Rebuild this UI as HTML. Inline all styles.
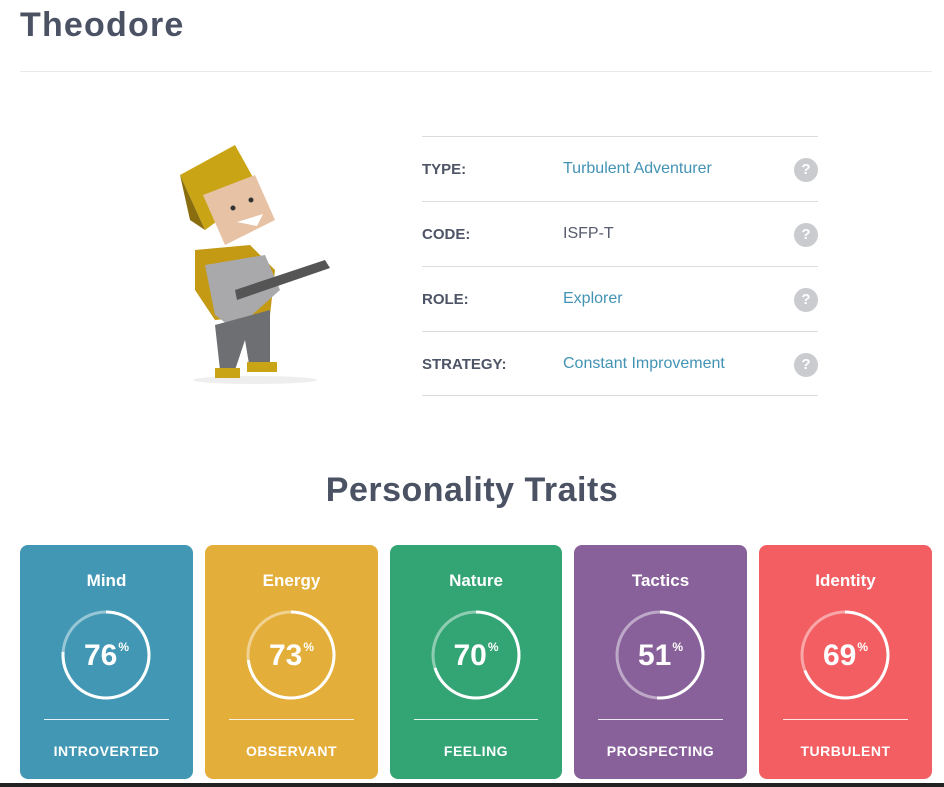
<!DOCTYPE html>
<html><head><meta charset="utf-8"><style>
*{margin:0;padding:0;box-sizing:border-box}
body{width:944px;height:787px;background:#fff;font-family:"Liberation Sans",sans-serif;position:relative;overflow:hidden;color:#4d5466}
h1{position:absolute;left:20px;top:6px;font-size:34px;font-weight:bold;color:#4b5264;letter-spacing:1.2px}
.hr{position:absolute;left:20px;top:71px;width:912px;height:1px;background:#e9e9ea}
.tbl{position:absolute;left:422px;top:136px;width:396px}
.row{height:65px;border-top:1px solid #dcdcdf;position:relative;font-size:16px}
.row:last-child{border-bottom:1px solid #dcdcdf}
.lab{position:absolute;left:0;top:24px;font-weight:bold;color:#4d5466;font-size:15px}
.val{position:absolute;left:141px;top:23px;color:#4393b4}
.val.d{color:#555b6a}
.q{position:absolute;right:0;top:21px;width:24px;height:24px;border-radius:50%;background:#c9cbce;color:#fff;font-weight:bold;font-size:15px;text-align:center;line-height:24px}
h2{position:absolute;left:0;width:944px;text-align:center;top:471px;font-size:34px;font-weight:bold;color:#4b5264;letter-spacing:0.5px}
.card{position:absolute;top:545px;width:173px;height:234px;border-radius:8px;color:#fff;text-align:center}
.card .t{position:absolute;top:26px;width:100%;font-size:17px;font-weight:bold}
.card svg{position:absolute;left:41px;top:65px}
.card .n{position:absolute;top:94px;width:100%;font-size:30px;font-weight:bold}
.card .n sup{font-size:12px;vertical-align:14px;margin-left:1px}
.card .l{position:absolute;left:24px;right:24px;top:174px;height:1px;background:rgba(255,255,255,.85)}
.card .b{position:absolute;top:198px;width:100%;font-size:14px;font-weight:bold;letter-spacing:.5px}
.bar{position:absolute;left:0;top:783px;width:944px;height:4px;background:#222}
</style></head><body>
<h1>Theodore</h1><div class="hr"></div>
<svg style="position:absolute;left:175px;top:140px" width="160" height="245" viewBox="0 0 160 245">
<ellipse cx="80" cy="240" rx="62" ry="4" fill="#eee"/>
<polygon points="5,35 60,5 85,50 30,90" fill="#c9a516"/>
<polygon points="5,35 30,90 15,80" fill="#8a6d0e"/>
<polygon points="28,55 80,35 100,80 50,105" fill="#e7c2a4"/>
<polygon points="20,110 75,105 100,130 95,175 40,180 20,150" fill="#c49a14"/>
<polygon points="30,125 90,115 105,150 60,190 40,175" fill="#a9a9ab"/>
<polygon points="40,185 95,170 95,225 75,230 70,200 60,230 45,230" fill="#6e6f72"/>
<rect x="40" y="228" width="25" height="10" fill="#c9a516"/><rect x="72" y="222" width="30" height="10" fill="#c9a516"/>
<polygon points="60,150 150,120 155,128 62,160" fill="#555"/>
<circle cx="58" cy="68" r="2.5" fill="#333"/><circle cx="76" cy="60" r="2.5" fill="#333"/>
<polygon points="62,82 88,74 82,86" fill="#fff"/>
</svg>
<div class="tbl">
<div class="row"><span class="lab">TYPE:</span><span class="val">Turbulent Adventurer</span><span class="q">?</span></div>
<div class="row"><span class="lab">CODE:</span><span class="val d">ISFP-T</span><span class="q">?</span></div>
<div class="row"><span class="lab">ROLE:</span><span class="val">Explorer</span><span class="q">?</span></div>
<div class="row"><span class="lab">STRATEGY:</span><span class="val">Constant Improvement</span><span class="q">?</span></div>
</div>
<h2>Personality Traits</h2>

<div class="card" style="left:20px;background:#4298b4"><div class="t">Mind</div>
<svg width="90" height="90"><circle cx="45" cy="45" r="43" fill="none" stroke="rgba(255,255,255,.45)" stroke-width="3"/><circle cx="45" cy="45" r="43" fill="none" stroke="#fff" stroke-width="3" stroke-dasharray="205.4 270.2" transform="rotate(-90 45 45)"/></svg>
<div class="n">76<sup>%</sup></div><div class="l"></div><div class="b">INTROVERTED</div></div>

<div class="card" style="left:205px;background:#e4ae3a"><div class="t">Energy</div>
<svg width="90" height="90"><circle cx="45" cy="45" r="43" fill="none" stroke="rgba(255,255,255,.45)" stroke-width="3"/><circle cx="45" cy="45" r="43" fill="none" stroke="#fff" stroke-width="3" stroke-dasharray="197.2 270.2" transform="rotate(-90 45 45)"/></svg>
<div class="n">73<sup>%</sup></div><div class="l"></div><div class="b">OBSERVANT</div></div>

<div class="card" style="left:390px;width:172px;background:#33a474"><div class="t">Nature</div>
<svg width="90" height="90"><circle cx="45" cy="45" r="43" fill="none" stroke="rgba(255,255,255,.45)" stroke-width="3"/><circle cx="45" cy="45" r="43" fill="none" stroke="#fff" stroke-width="3" stroke-dasharray="189.1 270.2" transform="rotate(-90 45 45)"/></svg>
<div class="n">70<sup>%</sup></div><div class="l"></div><div class="b">FEELING</div></div>

<div class="card" style="left:574px;background:#88619a"><div class="t">Tactics</div>
<svg width="90" height="90"><circle cx="45" cy="45" r="43" fill="none" stroke="rgba(255,255,255,.45)" stroke-width="3"/><circle cx="45" cy="45" r="43" fill="none" stroke="#fff" stroke-width="3" stroke-dasharray="137.8 270.2" transform="rotate(-90 45 45)"/></svg>
<div class="n">51<sup>%</sup></div><div class="l"></div><div class="b">PROSPECTING</div></div>

<div class="card" style="left:759px;background:#f25e62"><div class="t">Identity</div>
<svg width="90" height="90"><circle cx="45" cy="45" r="43" fill="none" stroke="rgba(255,255,255,.45)" stroke-width="3"/><circle cx="45" cy="45" r="43" fill="none" stroke="#fff" stroke-width="3" stroke-dasharray="186.4 270.2" transform="rotate(-90 45 45)"/></svg>
<div class="n">69<sup>%</sup></div><div class="l"></div><div class="b">TURBULENT</div></div>

<div class="bar"></div>
</body></html>
